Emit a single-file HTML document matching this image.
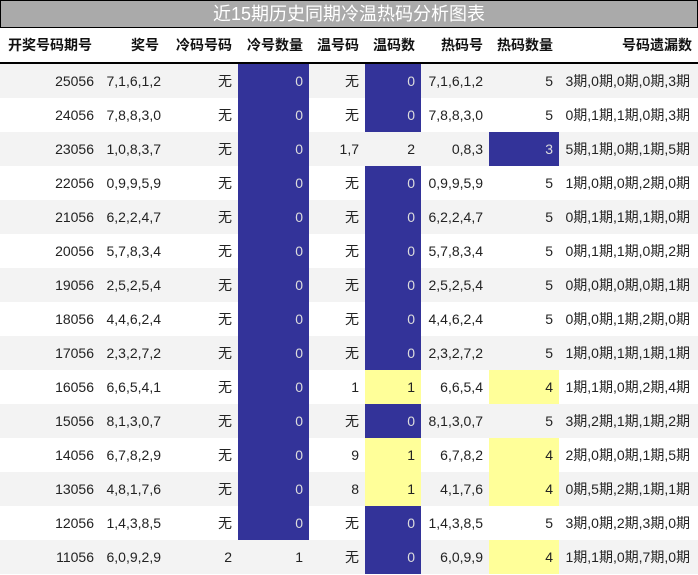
<!DOCTYPE html><html><head><meta charset="utf-8"><style>
body{margin:0;width:698px;height:575px;overflow:hidden;background:#fff;font-family:"Liberation Sans","Noto Sans CJK SC",sans-serif}
.t{position:absolute;left:0;top:0;width:696px;height:26px;background:#aaa;border:1px solid #000;color:#fff;font-size:18px;text-align:center;line-height:26px}
table{position:absolute;left:0;top:28px;border-collapse:collapse;table-layout:fixed;width:698px;font-size:14px;color:#222}
th{height:34px;font-weight:bold;text-align:right;padding:0 6px 0 0;border-bottom:2px solid #000;color:#111}
th:first-child{text-align:left;padding-left:8px}
td{height:34px;padding:0 6px 0 0;text-align:right;white-space:nowrap}
td:nth-child(2){padding-right:4px}
tr:nth-child(even) td{background:#f3f3f3}
td.b{background:#333399!important;color:#ddd}
td.y{background:#ffff99!important}
td:last-child{padding-right:8px}
</style></head><body>
<div class="t">近15期历史同期冷温热码分析图表</div>
<table>
<colgroup><col style="width:100px"><col style="width:65px"><col style="width:73px"><col style="width:71px"><col style="width:56px"><col style="width:56px"><col style="width:68px"><col style="width:70px"><col style="width:139px"></colgroup>
<tr><th>开奖号码期号</th><th>奖号</th><th>冷码号码</th><th>冷号数量</th><th>温号码</th><th>温码数</th><th>热码号</th><th>热码数量</th><th>号码遗漏数</th></tr>
<tr><td>25056</td><td>7,1,6,1,2</td><td>无</td><td class="b">0</td><td>无</td><td class="b">0</td><td>7,1,6,1,2</td><td>5</td><td>3期,0期,0期,0期,3期</td></tr>
<tr><td>24056</td><td>7,8,8,3,0</td><td>无</td><td class="b">0</td><td>无</td><td class="b">0</td><td>7,8,8,3,0</td><td>5</td><td>0期,1期,1期,0期,3期</td></tr>
<tr><td>23056</td><td>1,0,8,3,7</td><td>无</td><td class="b">0</td><td>1,7</td><td>2</td><td>0,8,3</td><td class="b">3</td><td>5期,1期,0期,1期,5期</td></tr>
<tr><td>22056</td><td>0,9,9,5,9</td><td>无</td><td class="b">0</td><td>无</td><td class="b">0</td><td>0,9,9,5,9</td><td>5</td><td>1期,0期,0期,2期,0期</td></tr>
<tr><td>21056</td><td>6,2,2,4,7</td><td>无</td><td class="b">0</td><td>无</td><td class="b">0</td><td>6,2,2,4,7</td><td>5</td><td>0期,1期,1期,1期,0期</td></tr>
<tr><td>20056</td><td>5,7,8,3,4</td><td>无</td><td class="b">0</td><td>无</td><td class="b">0</td><td>5,7,8,3,4</td><td>5</td><td>0期,1期,1期,0期,2期</td></tr>
<tr><td>19056</td><td>2,5,2,5,4</td><td>无</td><td class="b">0</td><td>无</td><td class="b">0</td><td>2,5,2,5,4</td><td>5</td><td>0期,0期,0期,0期,1期</td></tr>
<tr><td>18056</td><td>4,4,6,2,4</td><td>无</td><td class="b">0</td><td>无</td><td class="b">0</td><td>4,4,6,2,4</td><td>5</td><td>0期,0期,1期,2期,0期</td></tr>
<tr><td>17056</td><td>2,3,2,7,2</td><td>无</td><td class="b">0</td><td>无</td><td class="b">0</td><td>2,3,2,7,2</td><td>5</td><td>1期,0期,1期,1期,1期</td></tr>
<tr><td>16056</td><td>6,6,5,4,1</td><td>无</td><td class="b">0</td><td>1</td><td class="y">1</td><td>6,6,5,4</td><td class="y">4</td><td>1期,1期,0期,2期,4期</td></tr>
<tr><td>15056</td><td>8,1,3,0,7</td><td>无</td><td class="b">0</td><td>无</td><td class="b">0</td><td>8,1,3,0,7</td><td>5</td><td>3期,2期,1期,1期,2期</td></tr>
<tr><td>14056</td><td>6,7,8,2,9</td><td>无</td><td class="b">0</td><td>9</td><td class="y">1</td><td>6,7,8,2</td><td class="y">4</td><td>2期,0期,0期,1期,5期</td></tr>
<tr><td>13056</td><td>4,8,1,7,6</td><td>无</td><td class="b">0</td><td>8</td><td class="y">1</td><td>4,1,7,6</td><td class="y">4</td><td>0期,5期,2期,1期,1期</td></tr>
<tr><td>12056</td><td>1,4,3,8,5</td><td>无</td><td class="b">0</td><td>无</td><td class="b">0</td><td>1,4,3,8,5</td><td>5</td><td>3期,0期,2期,3期,0期</td></tr>
<tr><td>11056</td><td>6,0,9,2,9</td><td>2</td><td>1</td><td>无</td><td class="b">0</td><td>6,0,9,9</td><td class="y">4</td><td>1期,1期,0期,7期,0期</td></tr>
</table>
</body></html>
